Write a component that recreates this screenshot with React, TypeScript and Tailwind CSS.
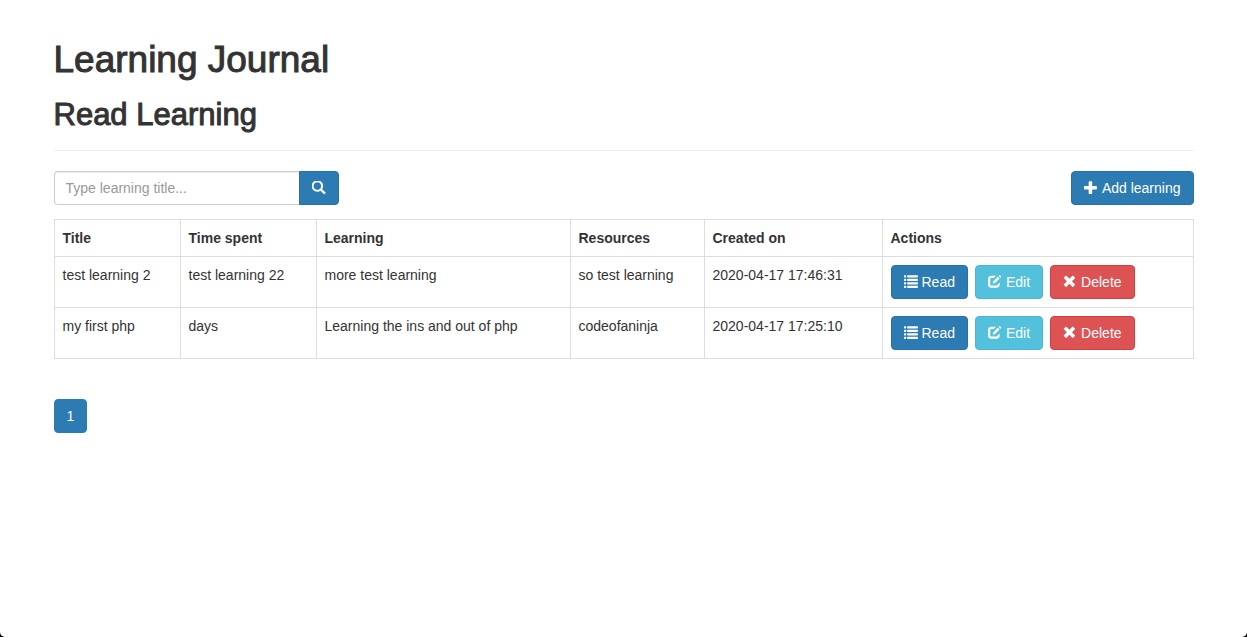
import type { ReactNode } from "react";

type IconProps = { children: ReactNode };

function Icon({ children }: IconProps) {
  return (
    <svg viewBox="0 0 1200 1200" className="size-3.5 shrink-0" fill="currentColor" aria-hidden="true">
      {children}
    </svg>
  );
}

const PLUS =
  "M450 1100h200q21 0 35.5-14.5t14.5-35.5v-350h350q21 0 35.5-14.5t14.5-35.5v-200q0-21-14.5-35.5t-35.5-14.5h-350v-350q0-21-14.5-35.5t-35.5-14.5h-200q-21 0-35.5 14.5t-14.5 35.5v350h-350q-21 0-35.5 14.5t-14.5 35.5v200q0 21 14.5 35.5t35.5 14.5h350v350q0 21 14.5 35.5t35.5 14.5z";

function PlusIcon() {
  return (
    <Icon>
      <path transform="translate(0 1120) scale(1 -1)" d={PLUS} />
    </Icon>
  );
}

function RemoveIcon() {
  return (
    <Icon>
      <path transform="translate(550 540) rotate(45) scale(1.02) translate(-550 -550)" d={PLUS} />
    </Icon>
  );
}

function SearchIcon() {
  return (
    <Icon>
      <path
        transform="translate(-40 1130) scale(1 -1)"
        d="M500 1191q100 0 191-39t156.500-104.500t104.500-156.500t39-191l-1-2l1-5q0-141-78-262l275-274q23-26 22.500-44.500t-22.500-42.500l-59-58q-26-20-46.500-20t-39.500 20l-275 274q-119-77-261-77l-5 1l-2-1q-100 0-191 39t-156.500 104.500t-104.500 156.500t-39 191t39 191t104.500 156.500t156.500 104.500t191 39zM500 1022q-88 0-162-43t-117-117t-43-162t43-162t117-117t162-43t162 43t117 117t43 162t-43 162t-117 117t-162 43z"
      />
    </Icon>
  );
}

function ListIcon() {
  return (
    <Icon>
      {[20, 320, 620, 920].map((y) => (
        <g key={y}>
          <rect x="0" y={y} width="190" height="190" rx="50" />
          <rect x="270" y={y} width="920" height="190" rx="50" />
        </g>
      ))}
    </Icon>
  );
}

function EditIcon() {
  return (
    <Icon>
      <path d="M680 60H300Q0 60 0 360V800Q0 1100 300 1100H700Q1000 1100 1000 800V640L810 820Q810 910 720 910H280Q190 910 190 820V340Q190 250 280 250H500Z" />
      <path d="M400 740L460 530L840 150L990 300L610 680Z" />
      <path d="M910 80L970 20Q1000-10 1030 20L1130 120Q1160 150 1130 180L1070 240Z" />
    </Icon>
  );
}

const BUTTON =
  "inline-flex h-[34px] items-center gap-1 rounded border px-3 text-sm leading-5 text-white";
const PRIMARY = "border-[#2770a8] bg-[#2d7bb3]";
const INFO = "border-[#46b8da] bg-[#53c1dc]";
const DANGER = "border-[#d63e41] bg-[#dd5354]";

const rows = [
  {
    title: "test learning 2",
    time: "test learning 22",
    learning: "more test learning",
    resources: "so test learning",
    created: "2020-04-17 17:46:31",
  },
  {
    title: "my first php",
    time: "days",
    learning: "Learning the ins and out of php",
    resources: "codeofaninja",
    created: "2020-04-17 17:25:10",
  },
];

const CELL = "border border-[#dddddd] p-2 text-left align-top";

export default function App() {
  return (
    <div className="bg-black">
      <main className="min-h-screen rounded-b-[5px] bg-white pt-10 font-['Liberation_Sans',Arial,sans-serif] text-sm leading-5 text-[#333333]">
        <div className="mx-auto max-w-[1170px] px-[15px]">
          <header className="border-b border-[#eeeeee] pb-4">
            <h1 className="text-[37px] leading-10 [-webkit-text-stroke:1px_#333333]">Learning Journal</h1>
            <h2 className="mt-4 text-[31px] leading-[38px] [-webkit-text-stroke:1px_#333333]">Read Learning</h2>
          </header>

          <div className="mt-5 flex items-center justify-between">
            <form role="search" className="flex w-[285px]" onSubmit={(e) => e.preventDefault()}>
              <input
                type="text"
                aria-label="Learning title"
                placeholder="Type learning title..."
                className="h-[34px] min-w-0 flex-1 rounded-l border border-r-0 border-[#cccccc] px-[11px] text-sm shadow-[inset_0_1px_1px_rgba(0,0,0,0.075)] placeholder:text-[#999999]"
              />
              <button
                type="submit"
                aria-label="Search"
                className="flex h-[34px] w-10 items-center justify-center rounded-r border border-[#2770a8] bg-[#2d7bb3] text-white"
              >
                <SearchIcon />
              </button>
            </form>
            <a href="#add" className={`${BUTTON} ${PRIMARY}`}>
              <PlusIcon />
              Add learning
            </a>
          </div>

          <table className="mt-3.5 w-full table-fixed border-collapse">
            <colgroup>
              <col className="w-[126px]" />
              <col className="w-[136px]" />
              <col className="w-[254px]" />
              <col className="w-[134px]" />
              <col className="w-[178px]" />
              <col />
            </colgroup>
            <thead>
              <tr>
                {["Title", "Time spent", "Learning", "Resources", "Created on", "Actions"].map((name) => (
                  <th key={name} scope="col" className={CELL}>
                    {name}
                  </th>
                ))}
              </tr>
            </thead>
            <tbody>
              {rows.map((row) => (
                <tr key={row.title}>
                  <td className={CELL}>{row.title}</td>
                  <td className={CELL}>{row.time}</td>
                  <td className={CELL}>{row.learning}</td>
                  <td className={CELL}>{row.resources}</td>
                  <td className={CELL}>{row.created}</td>
                  <td className={CELL}>
                    <div className="flex gap-[7px]">
                      <a href="#read" className={`${BUTTON} ${PRIMARY}`}>
                        <ListIcon />
                        Read
                      </a>
                      <a href="#edit" className={`${BUTTON} ${INFO}`}>
                        <EditIcon />
                        Edit
                      </a>
                      <button type="button" className={`${BUTTON} ${DANGER}`}>
                        <RemoveIcon />
                        Delete
                      </button>
                    </div>
                  </td>
                </tr>
              ))}
            </tbody>
          </table>

          <nav aria-label="Pages" className="mt-10 flex">
            <a
              href="#page-1"
              aria-current="page"
              className="flex h-[34px] items-center rounded border border-[#2d7bb3] bg-[#2d7bb3] px-3 text-white"
            >
              1
            </a>
          </nav>
        </div>
      </main>
    </div>
  );
}
